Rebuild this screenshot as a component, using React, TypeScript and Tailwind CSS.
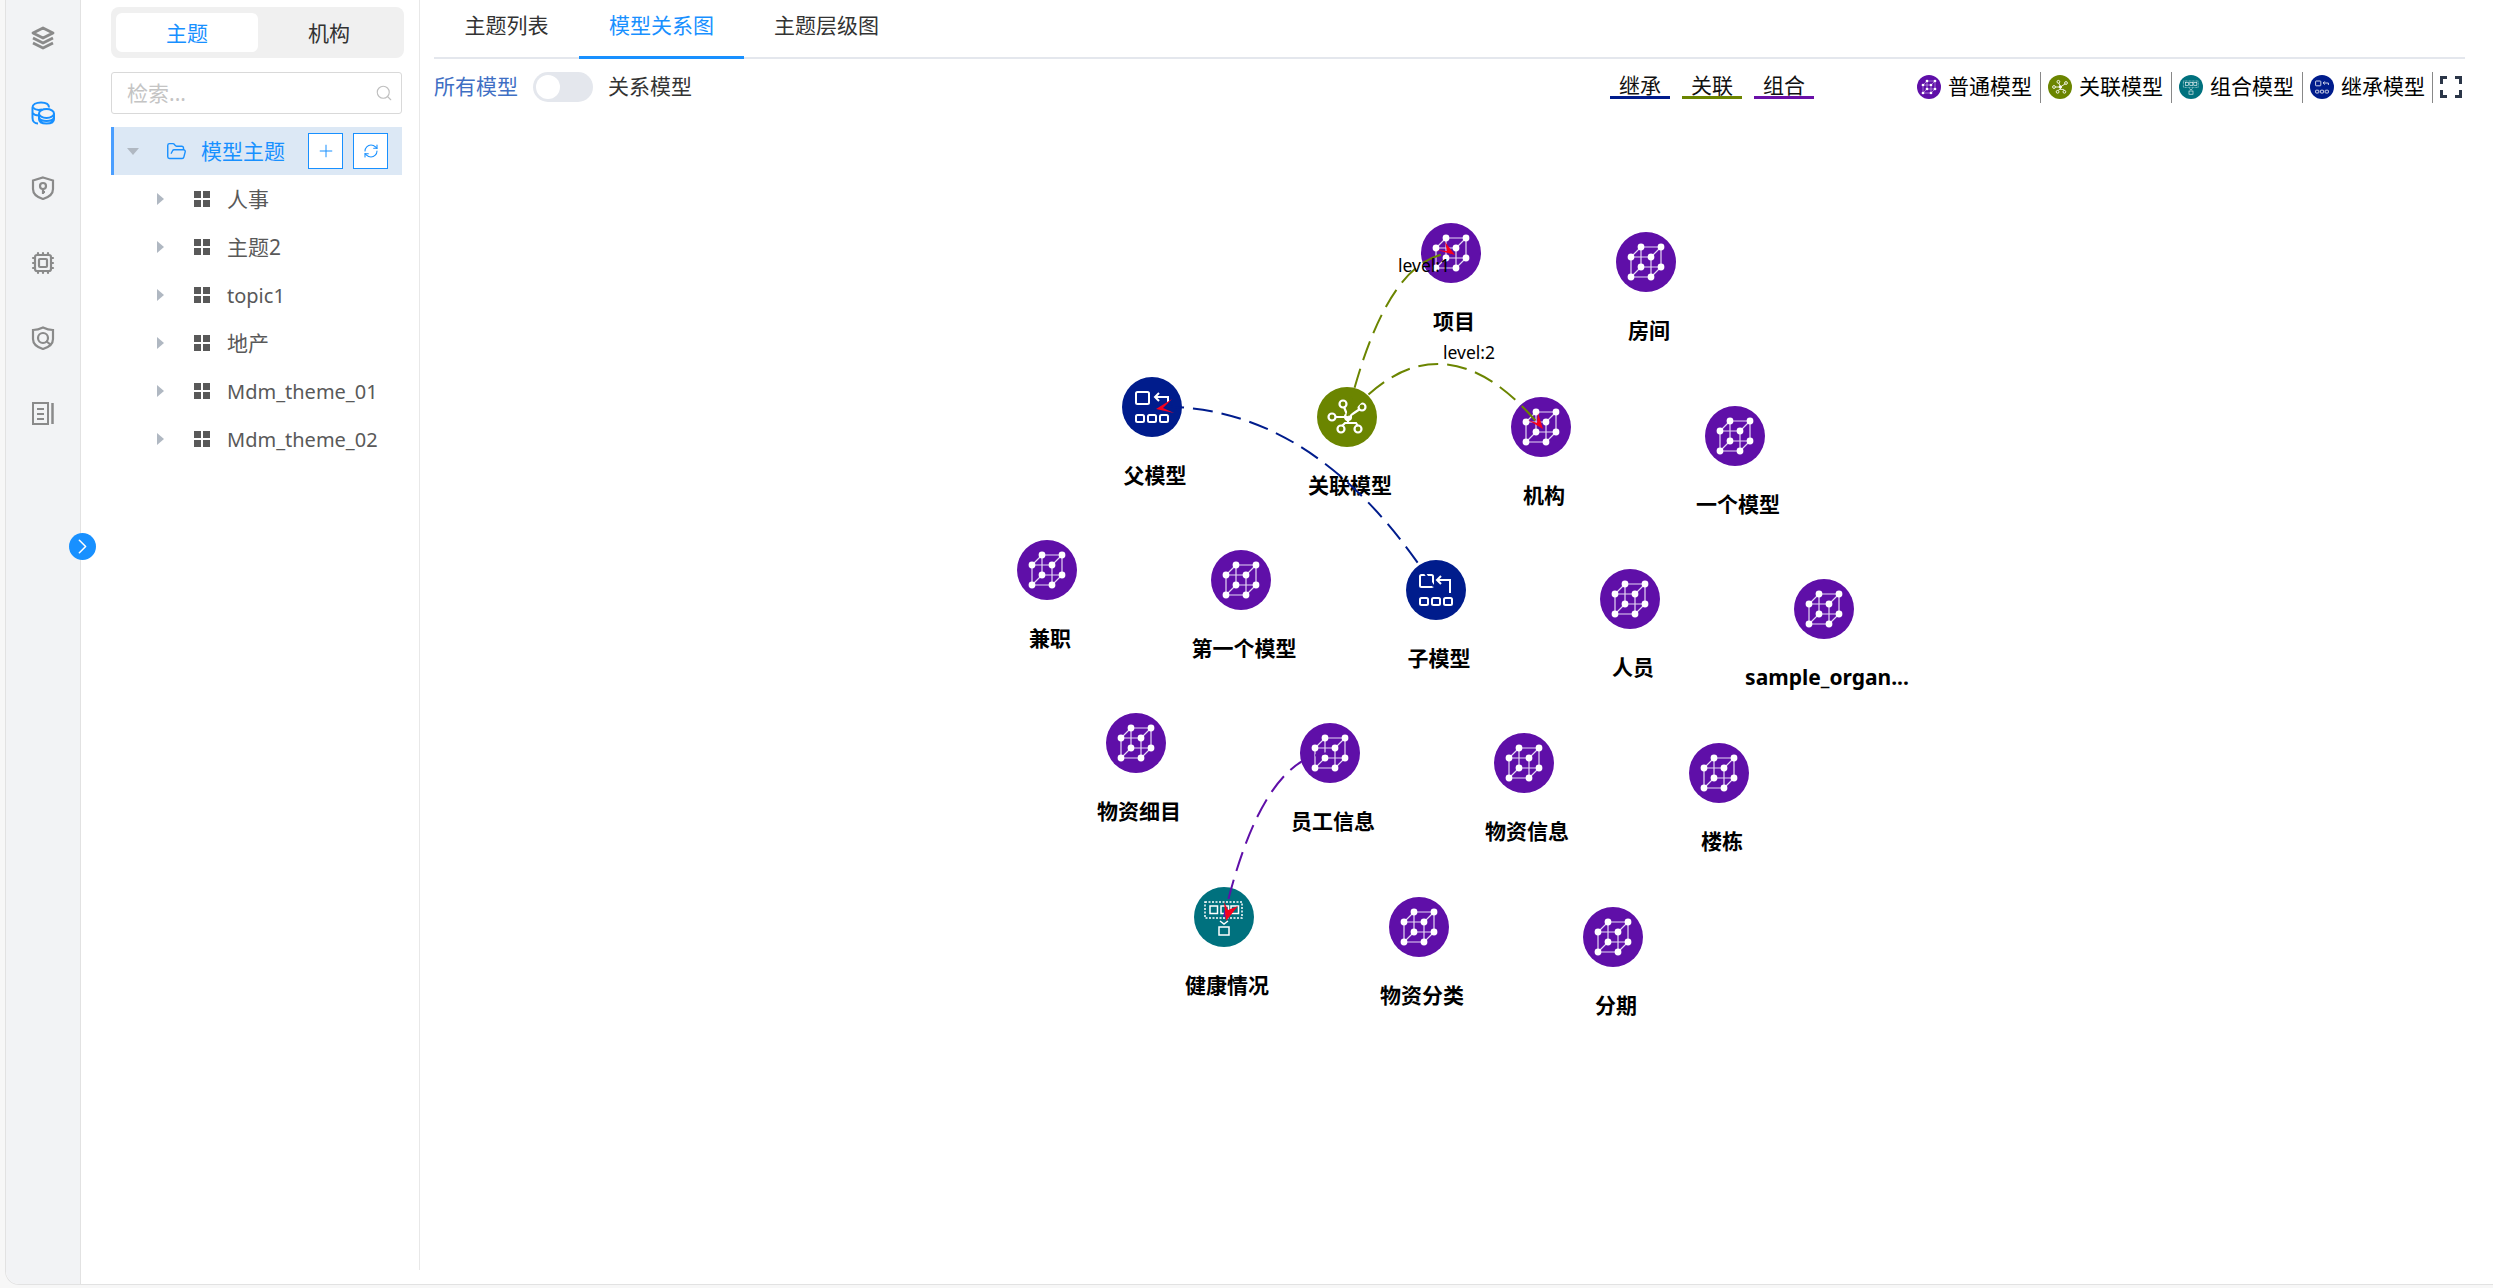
import { Plus, RefreshCw, Search, ChevronRight, FolderOpen, Cpu } from 'lucide-react'

const FONT = "font-['Noto_Sans','Noto_Sans_CJK_SC',sans-serif]"

const treeRows = [
  { name: '人事', cls: 'text-[21px]' },
  { name: '主题2', cls: 'text-[21px]' },
  { name: 'topic1', cls: 'text-[20px]' },
  { name: '地产', cls: 'text-[21px]' },
  { name: 'Mdm_theme_01', cls: 'text-[20px]' },
  { name: 'Mdm_theme_02', cls: 'text-[20px]' },
]

type Kind = 'plain' | 'assoc' | 'group' | 'inherit' | 'child'

const COLORS: Record<Kind, string> = {
  plain: '#5f0fa8',
  assoc: '#6b8500',
  group: '#00717e',
  inherit: '#001c8c',
  child: '#001c8c',
}

const nodes: { x: number; y: number; label: string; kind: Kind }[] = [
  { x: 1451, y: 253, label: '项目', kind: 'plain' },
  { x: 1646, y: 262, label: '房间', kind: 'plain' },
  { x: 1152, y: 407, label: '父模型', kind: 'inherit' },
  { x: 1347, y: 417, label: '关联模型', kind: 'assoc' },
  { x: 1541, y: 427, label: '机构', kind: 'plain' },
  { x: 1735, y: 436, label: '一个模型', kind: 'plain' },
  { x: 1047, y: 570, label: '兼职', kind: 'plain' },
  { x: 1241, y: 580, label: '第一个模型', kind: 'plain' },
  { x: 1436, y: 590, label: '子模型', kind: 'child' },
  { x: 1630, y: 599, label: '人员', kind: 'plain' },
  { x: 1824, y: 609, label: 'sample_organ...', kind: 'plain' },
  { x: 1136, y: 743, label: '物资细目', kind: 'plain' },
  { x: 1330, y: 753, label: '员工信息', kind: 'plain' },
  { x: 1524, y: 763, label: '物资信息', kind: 'plain' },
  { x: 1719, y: 773, label: '楼栋', kind: 'plain' },
  { x: 1224, y: 917, label: '健康情况', kind: 'group' },
  { x: 1419, y: 927, label: '物资分类', kind: 'plain' },
  { x: 1613, y: 937, label: '分期', kind: 'plain' },
]

const cubeDots = [
  [-5, -15], [15, -15], [-15, -5], [5, -5], [-5, 5], [15, 5], [-15, 15], [5, 15],
]

function CubeIcon() {
  return (
    <g>
      <path
        d="M-5-15H15V5H-5ZM-15-5H5V15H-15ZM-15-5L-5-15M5-5L15-15M5 15L15 5M-15 15L-5 5"
        fill="none"
        stroke="#e6d8f5"
        strokeWidth="1.2"
      />
      {cubeDots.map(([x, y]) => (
        <circle key={`${x}${y}`} cx={x} cy={y} r="3.4" fill="#fff" />
      ))}
    </g>
  )
}

function AssocIcon() {
  return (
    <g fill="none" stroke="#fff" strokeWidth="2.2">
      <path d="M1 0L-3-10M1 0L13-8M1 0H-12M1 0V6H-2L-5 9M1 6H9L11 9" />
      <circle cx="1" cy="0" r="3" fill="#fff" />
      <circle cx="-4" cy="-13" r="3.5" />
      <circle cx="15" cy="-10" r="3.5" />
      <circle cx="-15" cy="0" r="3.5" />
      <circle cx="-6" cy="12" r="3.5" />
      <circle cx="11" cy="12" r="3.5" />
    </g>
  )
}

function InheritIcon({ long }: { long?: boolean }) {
  return (
    <g fill="none" stroke="#fff" strokeWidth="2">
      <rect x="-16" y="-15" width="13" height="12" rx="1.5" />
      {long ? <path d="M14 3V-10H1M5-14L1-10L5-6" /> : <path d="M16-5V-10H3M7-14L3-10L7-6" />}
      <rect x="-16" y="8" width="8" height="7" rx="1.5" />
      <rect x="-4" y="8" width="8" height="7" rx="1.5" />
      <rect x="8" y="8" width="8" height="7" rx="1.5" />
    </g>
  )
}

function GroupIcon() {
  return (
    <g fill="none" stroke="#fff" strokeWidth="1.5">
      <rect x="-19" y="-15" width="37" height="16" strokeDasharray="2 1.5" />
      <rect x="-14" y="-11" width="7.5" height="7.5" />
      <rect x="-3" y="-11" width="7.5" height="7.5" />
      <rect x="7" y="-11" width="7.5" height="7.5" />
      <path d="M-4 4L0 7L4 4" />
      <rect x="-5" y="10" width="10" height="8" />
    </g>
  )
}

function NodeIcon({ kind }: { kind: Kind }) {
  if (kind === 'assoc') return <AssocIcon />
  if (kind === 'group') return <GroupIcon />
  if (kind === 'inherit') return <InheritIcon />
  if (kind === 'child') return <InheritIcon long />
  return <CubeIcon />
}

function LegendDot({ kind }: { kind: Kind }) {
  return (
    <svg width="24" height="24" viewBox="-30 -30 60 60" className="shrink-0">
      <circle r="30" fill={COLORS[kind]} />
      <NodeIcon kind={kind} />
    </svg>
  )
}

function Graph() {
  return (
    <svg width="2031" height="1155" viewBox="434 115 2031 1155" className="block">
      {nodes.map((n) => (
        <g key={n.label} transform={`translate(${n.x} ${n.y})`}>
          <circle r="30" fill={COLORS[n.kind]} />
          <NodeIcon kind={n.kind} />
          <text x="3" y="76" textAnchor="middle" fontSize="21" fontWeight="700" fill="#000">
            {n.label}
          </text>
        </g>
      ))}

      <g fill="none" strokeWidth="2" strokeDasharray="20 9">
        <path d="M1152 407Q1315 400 1436 590" stroke="#001c8c" strokeDashoffset="-12" />
        <path d="M1347 417Q1385 258 1451 253" stroke="#6b8500" strokeDashoffset="-1" />
        <path d="M1347 417Q1440 306 1541 427" stroke="#6b8500" strokeDashoffset="-2" />
        <path d="M1330 753Q1262 755 1224 917" stroke="#5f0fa8" strokeDashoffset="5" />
      </g>

      <g fill="#f5001e">
        <polygon points="1156,409 1172,399 1163,408 1174,413" />
        <polygon points="1455,255 1445,242 1447,251 1437,250" />
        <polygon points="1543,429 1538,413 1537,423 1528,420" />
        <polygon points="1226,921 1224,902 1228,910 1238,906" />
      </g>

      <g fontSize="17.5" fill="#000">
        <text x="1398" y="272">level:1</text>
        <text x="1443" y="359">level:2</text>
      </g>
    </svg>
  )
}

function RailIcons() {
  const gray = '#8a8a8a'
  return (
    <div className="flex flex-col items-center gap-[51px] pt-[26px]">
      <svg width="24" height="24" viewBox="0 0 24 24" fill="none" stroke={gray} strokeWidth="2.8" strokeLinejoin="round">
        <path d="M12 2L22 7L12 12L2 7Z" />
        <path d="M2 12L12 17L22 12" />
        <path d="M2 17L12 22L22 17" />
      </svg>
      <svg width="24" height="24" viewBox="0 0 24 24" fill="none" stroke="#1890ff" strokeWidth="2">
        <path d="M18 6.5C18 3.5 15 1.5 10 1.5S1.5 3.5 1.5 6.5V17C1.5 20 3.5 22.5 7 22.5" />
        <path d="M1.5 12C3 14 5 14.5 8 14.5M2 6.5C4 9 7 9.5 11 8.5" />
        <ellipse cx="15.5" cy="12.5" rx="7.5" ry="4.5" />
        <path d="M8 12.5V18C8 21 11 22.5 15.5 22.5S23 21 23 18V12.5M8 17C9 19 12 20 15.5 20S22 19 23 17" />
      </svg>
      <svg width="24" height="24" viewBox="0 0 24 24" fill="none" stroke={gray} strokeWidth="2.2">
        <path d="M12 1.5L22 4.5V13C22 18 17 21.5 12 23C7 21.5 2 18 2 13V4.5Z" />
        <circle cx="12" cy="10" r="3" />
        <path d="M12 13V18M12 16H14" />
      </svg>
      <Cpu size={24} color={gray} strokeWidth={2.2} />
      <svg width="24" height="24" viewBox="0 0 24 24" fill="none" stroke={gray} strokeWidth="2.2">
        <path d="M12 1.5C16 3.5 19 4 22 4V13C22 18 17 21.5 12 23C7 21.5 2 18 2 13V4C5 4 8 3.5 12 1.5Z" />
        <circle cx="12" cy="12" r="5" />
        <path d="M15 15L20 19" />
      </svg>
      <svg width="24" height="24" viewBox="0 0 24 24" fill="none" stroke={gray} strokeWidth="2">
        <path d="M2 2H17V23H2ZM6 8H13M6 13H13M6 18H13" />
        <path d="M21.5 2V23" strokeWidth="2.5" />
      </svg>
    </div>
  )
}

function Sidebar() {
  return (
    <aside className="h-[1270px] w-[339px] shrink-0 border-r border-[#e8e8e8] bg-white pl-[30px] pt-[7px]">
      <div className="flex h-[51px] w-[293px] rounded-[8px] bg-[#f0f0f0] pl-[5px] pt-[6px]">
        <div className="flex h-[39px] w-[142px] items-center justify-center rounded-[6px] bg-white pt-[2px] text-[21px] text-[#1890ff]">
          主题
        </div>
        <div className="flex h-[39px] w-[142px] items-center justify-center pt-[2px] text-[21px] text-[#333]">机构</div>
      </div>

      <div className="mt-[14px] flex h-[42px] w-[291px] items-center justify-between rounded-[3px] border border-[#d9d9d9] pl-[15px] pr-[8px] text-[21px] text-[#c4c4c4]">
        <span className="pt-[2px]">检索...</span>
        <Search size={18} strokeWidth={1.5} color="#bfbfbf" />
      </div>

      <div className="mt-[13px] flex h-[48px] w-[291px] items-center border-l-[3px] border-[#4a9eff] bg-[#dce8f5] text-[21px] text-[#1890ff]">
        <span className="ml-[13px] h-0 w-0 border-x-[6px] border-t-[7px] border-x-transparent border-t-[#b0b8c2]" />
        <FolderOpen size={21} strokeWidth={1.6} className="ml-[27px]" />
        <span className="ml-[14px] w-[107px] pt-[2px]">模型主题</span>
        <span className="flex h-[36px] w-[35px] items-center justify-center border border-[#1890ff] bg-white">
          <Plus size={20} strokeWidth={1.2} />
        </span>
        <span className="ml-[10px] flex h-[36px] w-[35px] items-center justify-center border border-[#1890ff] bg-white">
          <RefreshCw size={16} strokeWidth={1.6} />
        </span>
      </div>

      {treeRows.map((row) => (
        <div key={row.name} className={`flex h-[48px] w-[291px] items-center text-[#595959] ${row.cls}`}>
          <span className="ml-[46px] h-0 w-0 border-y-[6px] border-l-[7px] border-y-transparent border-l-[#b0b8c2]" />
          <span className="ml-[30px] grid h-[16px] w-[16px] grid-cols-2 gap-[2px]">
            <i className="bg-[#595959]" />
            <i className="bg-[#595959]" />
            <i className="bg-[#595959]" />
            <i className="bg-[#595959]" />
          </span>
          <span className="ml-[17px] pt-[2px]">{row.name}</span>
        </div>
      ))}
    </aside>
  )
}

function Toolbar() {
  return (
    <div className="flex h-[56px] items-center text-[21px]">
      <span className="text-[#3f6fc4]">所有模型</span>
      <span className="ml-[15px] flex h-[30px] w-[60px] items-center rounded-full bg-[#e4e7ed] pl-[3px]">
        <span className="h-[24px] w-[24px] rounded-full bg-white" />
      </span>
      <span className="ml-[15px] text-[#333]">关系模型</span>

      <div className="ml-[918px] flex items-center gap-[12px] text-[#111]">
        <span className="flex h-[24px] w-[60px] items-center justify-center border-b-[3px] border-[#001c8c]">继承</span>
        <span className="flex h-[24px] w-[60px] items-center justify-center border-b-[3px] border-[#6b8500]">关联</span>
        <span className="flex h-[24px] w-[60px] items-center justify-center border-b-[3px] border-[#6a10a8]">组合</span>
      </div>

      <div className="ml-[103px] flex items-center text-[#000]">
        <LegendDot kind="plain" />
        <span className="ml-[7px]">普通模型</span>
        <span className="ml-[8px] mr-[7px] h-[31px] w-px bg-[#888]" />
        <LegendDot kind="assoc" />
        <span className="ml-[7px]">关联模型</span>
        <span className="ml-[8px] mr-[7px] h-[31px] w-px bg-[#888]" />
        <LegendDot kind="group" />
        <span className="ml-[7px]">组合模型</span>
        <span className="ml-[8px] mr-[7px] h-[31px] w-px bg-[#888]" />
        <LegendDot kind="inherit" />
        <span className="ml-[7px]">继承模型</span>
        <span className="ml-[7px] mr-[7px] h-[31px] w-px bg-[#888]" />
        <svg width="22" height="22" viewBox="0 0 22 22" fill="none" stroke="#2b3648" strokeWidth="3">
          <path d="M1.5 8V1.5H7M15 1.5H20.5V8M20.5 14V20.5H15M7 20.5H1.5V14" />
        </svg>
      </div>
    </div>
  )
}

export default function App() {
  return (
    <div className={`relative h-[1288px] w-full overflow-hidden bg-[#f7f7f7] pb-[3px] pl-[5px] ${FONT}`}>
      <div className="flex h-full overflow-hidden rounded-bl-[14px] border-b border-l border-[#e2e2e2] bg-white">
        <nav className="w-[75px] shrink-0 border-r border-[#e2e2e2] bg-[#f2f3f5]">
          <RailIcons />
        </nav>
        <Sidebar />
        <main className="min-w-0 flex-1 pl-[14px] pr-[28px]">
          <div className="flex h-[59px] border-b-2 border-[#e4e7ed]">
            <div className="flex h-[59px] w-[145px] items-center justify-center pb-[8px] text-[21px] text-[#333]">主题列表</div>
            <div className="flex h-[59px] w-[165px] items-center justify-center border-b-[3px] border-[#1890ff] pb-[5px] text-[21px] text-[#1890ff]">模型关系图</div>
            <div className="flex h-[59px] w-[165px] items-center justify-center pb-[8px] text-[21px] text-[#333]">主题层级图</div>
          </div>
          <Toolbar />
          <Graph />
        </main>
      </div>
      <button className="absolute left-[69px] top-[533px] flex h-[27px] w-[27px] items-center justify-center rounded-full bg-[#1890ff] text-white">
        <ChevronRight size={25} strokeWidth={1.5} />
      </button>
    </div>
  )
}
